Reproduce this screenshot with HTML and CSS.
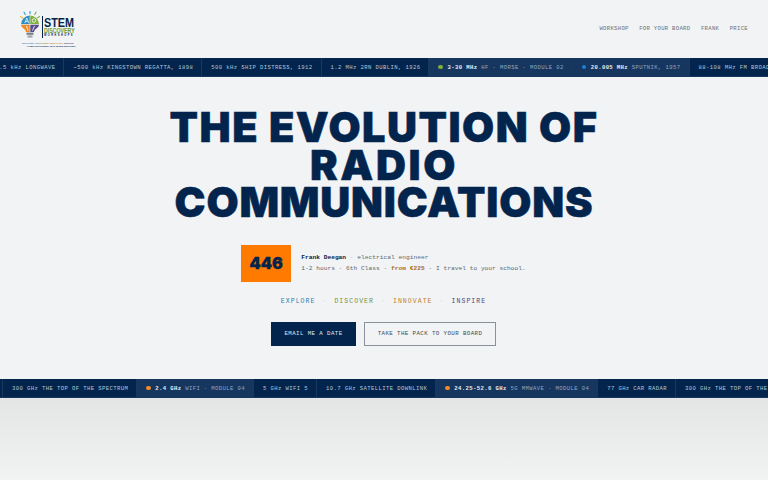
FILE: index.html
```html
<!DOCTYPE html>
<html lang="en">
<head>
<meta charset="utf-8">
<title>The Evolution of Radio Communications</title>
<link rel="stylesheet" href="styles.css">
</head>
<body>
<header class="site-header">
  <a class="logo" href="#">
    <div class="logo-top">
      <svg class="logo-bulb" width="20" height="28" viewBox="0 0 20 28">
        <g stroke-width="1.1" stroke-linecap="round">
          <path d="M10 0.3V2.8" stroke="#27a1d6"/>
          <path d="M4 1.2L5.3 3.6" stroke="#27a1d6"/>
          <path d="M0.5 5.5L2.6 6.9" stroke="#f2b632"/>
          <path d="M16 1.2L14.7 3.6" stroke="#7fae3c"/>
          <path d="M19.5 5.5L17.4 6.9" stroke="#7fae3c"/>
        </g>
        <path d="M10 4.5A9 9 0 0 0 1 13.5H10Z" fill="#2d8fc4"/>
        <path d="M10 4.5A9 9 0 0 1 19 13.5H10Z" fill="#7fae3c"/>
        <path d="M1 13.5C1 17 5.4 17.5 6 21H10V13.5Z" fill="#f08a24"/>
        <path d="M19 13.5C19 17 14.6 17.5 14 21H10V13.5Z" fill="#5b4a8f"/>
        <path d="M10 4.5V21M1 13.5H19" stroke="#f1f3f4" stroke-width="0.6"/>
        <path d="M4.8 12L6.8 7L8.8 12M5.6 10.4H8" fill="none" stroke="#f4f6f7" stroke-width="0.8"/>
        <circle cx="14" cy="9.5" r="1.8" fill="none" stroke="#f4f6f7" stroke-width="0.9"/>
        <path d="M6.5 15L8 19.5" stroke="#f4f6f7" stroke-width="0.9"/>
        <path d="M14.5 15L12.5 19.5" stroke="#f4f6f7" stroke-width="0.9"/>
        <rect x="6.5" y="21.6" width="7" height="2.2" fill="#7a8088"/>
        <rect x="7.5" y="24.4" width="5" height="2.2" fill="#a0a6ac"/>
      </svg>
      <div class="logo-word">
        <span class="logo-stem">STEM</span>
        <span class="logo-disc">DISCOVERY</span>
        <span class="logo-work">WORKSHOPS</span>
      </div>
    </div>
    <div class="logo-strap">
      <span class="c-blue">EXPLORE</span> | <span class="c-green">DISCOVER</span> | <span class="c-orange">INNOVATE</span> | <span class="c-purple">INSPIRE</span>
    </div>
    <div class="logo-sub">HANDS-ON LEARNING, REAL-WORLD DISCOVERY</div>
  </a>
  <nav class="nav">
    <a href="#">WORKSHOP</a>
    <a href="#">FOR YOUR BOARD</a>
    <a href="#">FRANK</a>
    <a href="#">PRICE</a>
  </nav>
</header>

<div class="ticker">
  <div class="track track-top">
    <span class="item">137.5 kHz LONGWAVE</span>
    <span class="item">~500 kHz KINGSTOWN REGATTA, 1898</span>
    <span class="item">500 kHz SHIP DISTRESS, 1912</span>
    <span class="item">1.2 MHz 2RN DUBLIN, 1926</span>
    <span class="item on"><i class="dot d-green"></i><b>3-30 MHz</b> HF · MORSE · MODULE 02</span>
    <span class="item on"><i class="dot d-blue"></i><b>20.005 MHz</b> SPUTNIK, 1957</span>
    <span class="item">88-108 MHz FM BROADCAST</span>
  </div>
</div>

<main class="hero">
  <h1 class="title">
    <span class="line line-a">THE EVOLUTION OF</span>
    <span class="line line-b">RADIO</span>
    <span class="line line-c">COMMUNICATIONS</span>
  </h1>
  <div class="meta">
    <div class="badge">446</div>
    <div class="meta-text">
      <p class="who"><strong>Frank Deegan</strong> <span class="sep">·</span> electrical engineer</p>
      <p class="facts">1-2 hours · 6th Class · <em>from €225</em> · I travel to your school.</p>
    </div>
  </div>
  <div class="tags">
    <span class="c-blue">EXPLORE</span><i>·</i><span class="c-green">DISCOVER</span><i>·</i><span class="c-orange">INNOVATE</span><i>·</i><span class="c-purple">INSPIRE</span>
  </div>
  <div class="actions">
    <a class="btn btn-primary" href="#">EMAIL ME A DATE</a>
    <a class="btn btn-ghost" href="#">TAKE THE PACK TO YOUR BOARD</a>
  </div>
</main>

<div class="ticker">
  <div class="track track-bottom">
    <span class="item">300 GHz THE TOP OF THE SPECTRUM</span>
    <span class="item on"><i class="dot d-orange"></i><b>2.4 GHz</b> WIFI · MODULE 04</span>
    <span class="item">5 GHz WIFI 5</span>
    <span class="item">10.7 GHz SATELLITE DOWNLINK</span>
    <span class="item on"><i class="dot d-orange"></i><b>24.25-52.6 GHz</b> 5G MMWAVE · MODULE 04</span>
    <span class="item">77 GHz CAR RADAR</span>
    <span class="item">300 GHz THE TOP OF THE SPECTRUM</span>
  </div>
</div>
<div class="below"></div>
</body>
</html>
```

FILE: styles.css
```css
* { box-sizing: border-box; margin: 0; padding: 0; }
html, body { height: 100%; }
body {
  width: 768px;
  height: 480px;
  overflow: hidden;
  background: #f1f3f4;
  color: #03244d;
  font-family: "Liberation Mono", "DejaVu Sans Mono", monospace;
  display: flex;
  flex-direction: column;
}
a { color: inherit; text-decoration: none; }

.site-header {
  height: 58px;
  padding: 11px 20px 0 20px;
  display: flex;
  justify-content: space-between;
  align-items: flex-start;
}
.logo { display: flex; flex-direction: column; width: 56px; }
.logo-top { display: flex; align-items: flex-start; height: 28px; gap: 2px; }
.logo-bulb { flex: none; }
.logo-word {
  display: flex; flex-direction: column;
  margin-top: 5px;
  border-left: 1px solid #03244d;
  padding: 1px 0 0 1px;
  height: 22px;
  font-family: "Liberation Sans", sans-serif;
  font-weight: 700;
  white-space: nowrap;
}
.logo-stem, .logo-disc { transform-origin: left center; }
.logo-stem { font-size: 13.5px; line-height: 11px; color: #03244d; transform: scaleX(0.8); }
.logo-disc { font-size: 6.4px; line-height: 6px; color: #6f9a35; transform: scaleX(0.82); }
.logo-work { font-size: 2.6px; line-height: 3px; letter-spacing: 1.4px; color: #03244d; }
.logo-strap {
  margin-top: 3px;
  margin-left: 2px;
  font-family: "Liberation Sans", sans-serif;
  font-size: 2.4px; line-height: 3px; font-weight: 700;
  white-space: nowrap; color: #777;
}
.logo-sub {
  font-family: "Liberation Sans", sans-serif;
  font-size: 2px; line-height: 2px; font-weight: 700;
  white-space: nowrap; color: #03244d;
  padding-left: 7px;
}

.nav {
  display: flex; gap: 10.5px;
  margin-top: 14px;
  font-size: 5.6px; line-height: 8px;
  letter-spacing: 0.3px;
  color: #6a727a;
}

.ticker {
  height: 19px;
  background: #03244d;
  overflow: hidden;
  flex: none;
  border-bottom: 1px solid #16365f;
}
.track {
  display: flex;
  height: 100%;
  white-space: nowrap;
  font-size: 5.6px;
  letter-spacing: 0.39px;
  color: #b4c6d8;
}
.track-top { margin-left: -21px; }
.track-bottom { margin-left: 2px; border-left: 1px solid #17385f; }
.item {
  flex: none;
  display: flex;
  align-items: center;
  padding: 0 8px 0 9px;
  border-right: 1px solid #17385f;
  white-space: pre;
}
.item.on { background: #16365f; color: #8ea8c2; }
.item b { color: #e8eef4; font-weight: 700; }
.dot { width: 4.5px; height: 4.5px; border-radius: 50%; margin-right: 4.5px; flex: none; }
.d-green { background: #7fae3c; }
.d-blue { background: #1f7fd0; }
.d-orange { background: #f08a24; }

.hero {
  height: 302px;
  flex: none;
  display: flex;
  flex-direction: column;
  align-items: center;
  padding-top: 32px;
}
.title {
  text-align: center;
  font-family: Inter, "Liberation Sans", sans-serif;
  font-weight: 900;
  font-size: 41.5px;
  line-height: 37.5px;
  color: #03244d;
  -webkit-text-stroke: 0.5px #03244d;
}
.line { display: block; white-space: nowrap; }
.line-a { letter-spacing: 1.5px; }
.line-b { letter-spacing: 2.6px; }
.line-c { letter-spacing: 0.8px; }
.meta {
  display: flex;
  align-items: center;
  gap: 10px;
  margin: 23px 1px 0 0;
}
.badge {
  width: 50px; height: 37px;
  background: #ff7a00;
  color: #03244d;
  display: flex; align-items: center; justify-content: center;
  font-family: Inter, sans-serif;
  font-weight: 900;
  font-size: 16px;
  -webkit-text-stroke: 0.3px #03244d;
}
.meta-text { font-size: 6.2px; letter-spacing: 0.03px; color: #5d6670; display: flex; flex-direction: column; gap: 3px; }
.meta-text p { line-height: 8px; white-space: pre; }
.meta-text strong { color: #03244d; font-weight: 700; }
.meta-text em { font-style: normal; font-weight: 700; color: #a9691c; }
.sep { color: #a5adb5; }
.tags {
  display: flex;
  gap: 7px;
  margin: 15px 1px 0 0;
  font-size: 6.5px;
  line-height: 9px;
  letter-spacing: 1.05px;
}
.tags i { font-style: normal; color: #c5cbd0; }
.c-blue { color: #2d7fb8; }
.c-green { color: #75923f; }
.c-orange { color: #c5822f; }
.c-purple { color: #4a4a7d; }
.actions { display: flex; gap: 8px; margin: 16px 1px 0 0; }
.btn {
  height: 24px;
  display: flex; align-items: center; justify-content: center;
  font-size: 5.8px;
  letter-spacing: 0.4px;
}
.btn-primary { width: 85px; background: #03244d; color: #dbe5ee; }
.btn-ghost { width: 132px; border: 1px solid #8a9198; color: #414b55; }
.below {
  flex: 1;
  background: linear-gradient(#e4e6e6, #f1f2f2);
}
```
